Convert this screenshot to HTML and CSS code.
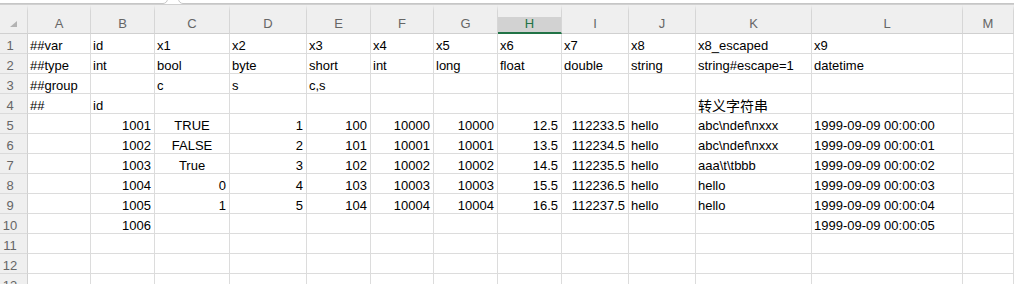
FILE: index.html
```html
<!DOCTYPE html>
<html>
<head>
<meta charset="utf-8">
<link rel="stylesheet" href="styles.css">
</head>
<body>
<div class="app">
  <div class="topbar">
    <div class="namebox"></div>
    <div class="formulabox"></div>
  </div>
  <div class="sheet">
    <div class="hd corner"><svg width="7" height="6" viewBox="0 0 7 6"><polygon points="7,0 7,6 0,6" fill="#b3b3b3"/></svg></div>
    <div class="hd">A</div><div class="hd">B</div><div class="hd">C</div><div class="hd">D</div><div class="hd">E</div><div class="hd">F</div><div class="hd">G</div><div class="hd sel">H</div><div class="hd">I</div><div class="hd">J</div><div class="hd">K</div><div class="hd">L</div><div class="hd">M</div>

    <div class="rh">1</div>
    <div class="c">##var</div><div class="c">id</div><div class="c">x1</div><div class="c">x2</div><div class="c">x3</div><div class="c">x4</div><div class="c">x5</div><div class="c">x6</div><div class="c">x7</div><div class="c">x8</div><div class="c">x8_escaped</div><div class="c">x9</div><div class="c"></div>

    <div class="rh">2</div>
    <div class="c">##type</div><div class="c">int</div><div class="c">bool</div><div class="c">byte</div><div class="c">short</div><div class="c">int</div><div class="c">long</div><div class="c">float</div><div class="c">double</div><div class="c">string</div><div class="c">string#escape=1</div><div class="c">datetime</div><div class="c"></div>

    <div class="rh">3</div>
    <div class="c">##group</div><div class="c"></div><div class="c">c</div><div class="c">s</div><div class="c">c,s</div><div class="c"></div><div class="c"></div><div class="c"></div><div class="c"></div><div class="c"></div><div class="c"></div><div class="c"></div><div class="c"></div>

    <div class="rh">4</div>
    <div class="c">##</div><div class="c">id</div><div class="c"></div><div class="c"></div><div class="c"></div><div class="c"></div><div class="c"></div><div class="c"></div><div class="c"></div><div class="c"></div><div class="c cjk">转义字符串</div><div class="c"></div><div class="c"></div>

    <div class="rh">5</div>
    <div class="c"></div><div class="c r">1001</div><div class="c m">TRUE</div><div class="c r">1</div><div class="c r">100</div><div class="c r">10000</div><div class="c r">10000</div><div class="c r">12.5</div><div class="c r">112233.5</div><div class="c">hello</div><div class="c">abc\ndef\nxxx</div><div class="c">1999-09-09 00:00:00</div><div class="c"></div>

    <div class="rh">6</div>
    <div class="c"></div><div class="c r">1002</div><div class="c m">FALSE</div><div class="c r">2</div><div class="c r">101</div><div class="c r">10001</div><div class="c r">10001</div><div class="c r">13.5</div><div class="c r">112234.5</div><div class="c">hello</div><div class="c">abc\ndef\nxxx</div><div class="c">1999-09-09 00:00:01</div><div class="c"></div>

    <div class="rh">7</div>
    <div class="c"></div><div class="c r">1003</div><div class="c m">True</div><div class="c r">3</div><div class="c r">102</div><div class="c r">10002</div><div class="c r">10002</div><div class="c r">14.5</div><div class="c r">112235.5</div><div class="c">hello</div><div class="c">aaa\t\tbbb</div><div class="c">1999-09-09 00:00:02</div><div class="c"></div>

    <div class="rh">8</div>
    <div class="c"></div><div class="c r">1004</div><div class="c r">0</div><div class="c r">4</div><div class="c r">103</div><div class="c r">10003</div><div class="c r">10003</div><div class="c r">15.5</div><div class="c r">112236.5</div><div class="c">hello</div><div class="c">hello</div><div class="c">1999-09-09 00:00:03</div><div class="c"></div>

    <div class="rh">9</div>
    <div class="c"></div><div class="c r">1005</div><div class="c r">1</div><div class="c r">5</div><div class="c r">104</div><div class="c r">10004</div><div class="c r">10004</div><div class="c r">16.5</div><div class="c r">112237.5</div><div class="c">hello</div><div class="c">hello</div><div class="c">1999-09-09 00:00:04</div><div class="c"></div>

    <div class="rh">10</div>
    <div class="c"></div><div class="c r">1006</div><div class="c"></div><div class="c"></div><div class="c"></div><div class="c"></div><div class="c"></div><div class="c"></div><div class="c"></div><div class="c"></div><div class="c"></div><div class="c">1999-09-09 00:00:05</div><div class="c"></div>

    <div class="rh">11</div>
    <div class="c"></div><div class="c"></div><div class="c"></div><div class="c"></div><div class="c"></div><div class="c"></div><div class="c"></div><div class="c"></div><div class="c"></div><div class="c"></div><div class="c"></div><div class="c"></div><div class="c"></div>

    <div class="rh">12</div>
    <div class="c"></div><div class="c"></div><div class="c"></div><div class="c"></div><div class="c"></div><div class="c"></div><div class="c"></div><div class="c"></div><div class="c"></div><div class="c"></div><div class="c"></div><div class="c"></div><div class="c"></div>

    <div class="rh">13</div>
    <div class="c"></div><div class="c"></div><div class="c"></div><div class="c"></div><div class="c"></div><div class="c"></div><div class="c"></div><div class="c"></div><div class="c"></div><div class="c"></div><div class="c"></div><div class="c"></div><div class="c"></div>
  </div>
</div>
</body>
</html>
```
FILE: styles.css
```css
* { box-sizing: border-box; }
html, body { margin: 0; padding: 0; background: #fff; }
body {
  width: 1014px;
  height: 284px;
  overflow: hidden;
  font-family: "Liberation Sans", Arial, sans-serif;
  font-size: 13px;
  color: #000;
}
.app { width: 1014px; }
.topbar {
  height: 5px;
  border-bottom: 1px solid #d0d0d0;
  background: #fff;
  display: flex;
  overflow: hidden;
}
.namebox {
  width: 178px;
  height: 24px;
  margin-left: -10px;
  margin-top: -20px;
  border: 1px solid #c6c6c6;
  border-radius: 5px;
  flex: none;
}
.formulabox {
  flex: 1;
  height: 24px;
  margin-left: 10px;
  margin-right: -20px;
  margin-top: -20px;
  border: 1px solid #c6c6c6;
  border-radius: 5px;
}
.sheet {
  display: grid;
  grid-template-columns: 28px 63px 64px 75px 77px 64px 63px 64px 64px 67px 67px 116px 151px 51px;
  grid-auto-rows: 20px;
  grid-template-rows: 29px;
  background: #fff;
}
.hd {
  background: #efefef;
  color: #666;
  text-align: center;
  border-right: 1px solid #d6d6d6;
  border-bottom: 1px solid #d0d0d0;
  border-top: 6px solid #efefef;
  padding-top: 5px;
  line-height: 15px;
  height: 29px;
  box-shadow: inset 0 6px 0 #efefef;
}
.hd.corner {
  padding: 10px 0 0 10px;
  line-height: 0;
  text-align: left;
}
.hd.sel {
  background: #d2d2d2;
  color: #217346;
  border-bottom: 2px solid #217346;
}
.rh {
  background: #efefef;
  color: #666;
  text-align: center;
  padding: 4px 7px 0 0;
  line-height: 15px;
  border-right: 1px solid #d0d0d0;
  border-bottom: 1px solid #dadada;
}
.c {
  border-right: 1px solid #dcdcdc;
  border-bottom: 1px solid #dcdcdc;
  padding: 4px 2px 0 2px;
  line-height: 15px;
  white-space: nowrap;
}
.c.r { text-align: right; padding-right: 3px; }
.c.m { text-align: center; }
.c.cjk {
  font-family: "Noto Sans CJK SC", "Liberation Sans", sans-serif;
  font-size: 14px;
}
```
